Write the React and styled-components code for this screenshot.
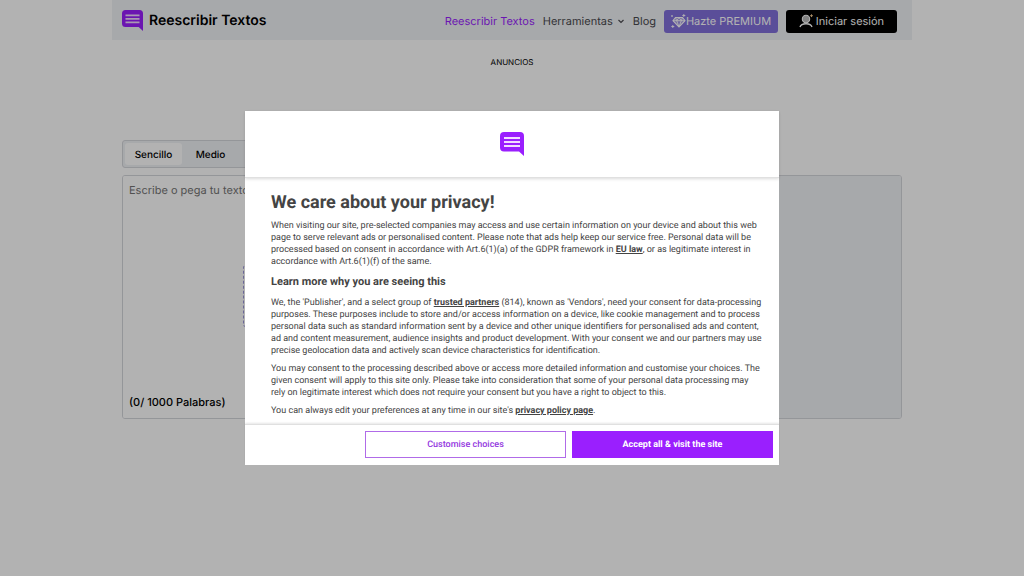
import React from 'react';
import styled, { createGlobalStyle } from 'styled-components';

const GlobalStyle = createGlobalStyle`
  * {
    box-sizing: border-box;
  }
  body {
    margin: 0;
    background: #fff;
    color: #000;
    font-family: Inter, "Liberation Sans", sans-serif;
    font-size: 11px;
    line-height: 16px;
    text-rendering: geometricPrecision;
  }
  button, textarea {
    font: inherit;
    margin: 0;
    text-rendering: inherit;
  }
  a {
    color: inherit;
    text-decoration: none;
  }
`;

const Container = styled.div`
  max-width: 800px;
  margin: 0 auto;
`;

const Header = styled.header`
  display: flex;
  align-items: center;
  justify-content: space-between;
  height: 40px;
  padding: 2px 15px 0 10px;
  background: #f0f2f5;
`;

const Brand = styled.a`
  display: flex;
  align-items: center;
  gap: 6px;
  padding-bottom: 1px;
  font-size: 14px;
  font-weight: 600;
`;

const Nav = styled.nav`
  display: flex;
  align-items: center;
  gap: 8px;
`;

const NavLink = styled.a`
  display: flex;
  align-items: center;
  gap: 4px;
  color: ${props => (props.$active ? '#9a1ffe' : '#4a4a4f')};
`;

const NavButton = styled.button`
  display: flex;
  align-items: center;
  justify-content: center;
  gap: ${props => (props.$dark ? '3px' : '0')};
  width: ${props => (props.$dark ? '111px' : '114px')};
  height: 23px;
  padding: 0;
  border: 0;
  border-radius: 3px;
  background: ${props => (props.$dark ? '#000' : '#8270dc')};
  color: #fff;
  white-space: nowrap;
  cursor: pointer;
`;

const AdLabel = styled.p`
  margin: 0;
  padding: 14px 0 70px;
  font-size: 8px;
  text-align: center;
`;

const Main = styled.main`
  padding: 0 10px;
`;

const Tabs = styled.div`
  display: flex;
  width: 50%;
  height: 28px;
  padding: 2px;
  border: 1px solid #d5d7dc;
  border-radius: 3px;
  background: #f0f2f5;
`;

const Tab = styled.button`
  width: 57px;
  padding: 1px 0 0;
  border: 0;
  border-radius: 3px;
  background: ${props => (props.$active ? '#fff' : 'transparent')};
  color: #000;
  font-size: 10px;
  font-weight: 500;
  cursor: pointer;
`;

const Editor = styled.section`
  display: grid;
  grid-template-columns: 1fr 1fr;
  height: 244px;
  margin-top: 7px;
  border: 1px solid #d5d7dc;
  border-radius: 3px;
  overflow: hidden;
`;

const Pane = styled.div`
  display: flex;
  flex-direction: column;
  align-items: center;
  justify-content: space-between;
  padding: 6px;
  background: ${props => (props.$result ? '#f0f2f5' : '#fff')};
`;

const Input = styled.textarea`
  width: 100%;
  height: 70px;
  padding: 0;
  border: 0;
  outline: 0;
  resize: none;
  background: transparent;
  &::placeholder {
    color: #757575;
    opacity: 1;
  }
`;

const DropZone = styled.div`
  width: 150px;
  height: 62px;
  border: 1px dashed #9a94d8;
  border-radius: 3px;
`;

const Counter = styled.p`
  align-self: stretch;
  margin: 54px 0 0;
  padding-bottom: 2px;
  font-weight: 500;
`;

const Overlay = styled.div`
  position: fixed;
  inset: 0;
  display: flex;
  align-items: center;
  justify-content: center;
  background: rgba(0, 0, 0, .3);
`;

const Dialog = styled.div`
  width: 534px;
  max-width: 100%;
  background: #fff;
  color: #444;
  font-family: Roboto, "Liberation Sans", sans-serif;
  font-size: 9px;
  line-height: 12px;
`;

const DialogHead = styled.div`
  display: flex;
  align-items: center;
  justify-content: center;
  height: 67px;
  border-bottom: 1px solid #e0e0e0;
  box-shadow: 0 1px 3px rgba(0, 0, 0, .15);
`;

const DialogBody = styled.div`
  padding: 13px 14px 1px 26px;
  p {
    margin: 0 0 6px;
  }
  a {
    font-weight: 700;
    text-decoration: underline;
  }
`;

const Title = styled.h1`
  margin: 0 0 5px;
  font-size: 18px;
  font-weight: 700;
  line-height: 24px;
`;

const Subtitle = styled.h2`
  margin: 7px 0 8px;
  font-size: 11px;
  font-weight: 700;
  line-height: 14px;
`;

const DialogFoot = styled.div`
  display: flex;
  justify-content: flex-end;
  gap: 6px;
  padding: 6px 6px 7px;
  border-top: 1px solid #e0e0e0;
  box-shadow: 0 -1px 2px rgba(0, 0, 0, .1);
`;

const Choice = styled.button`
  width: 201px;
  height: 27px;
  padding: 0;
  border: 1px solid ${props => (props.$filled ? '#9a1ffe' : '#b06be8')};
  background: ${props => (props.$filled ? '#9a1ffe' : '#fff')};
  color: ${props => (props.$filled ? '#fff' : '#9438e0')};
  font-weight: ${props => (props.$filled ? 700 : 500)};
  cursor: pointer;
`;

const Logo = ({ size }) => (
  <svg width={size} height={size} viewBox="0 0 24 24" aria-hidden="true">
    <path d="M4 0h16a4 4 0 0 1 4 4v20l-5-4.500H4a4 4 0 0 1-4-4V4a4 4 0 0 1 4-4z" fill="#9a1ffe" />
    <path d="M4 6h16M4 10h16M4 14h16" stroke="#f3dcff" strokeWidth="2" />
  </svg>
);

const Chevron = () => (
  <svg width="8" height="8" viewBox="0 0 8 8" fill="none" stroke="currentColor" strokeWidth="1.2" aria-hidden="true">
    <path d="M1.500 3 4 5.500 6.500 3" />
  </svg>
);

const Diamond = () => (
  <svg width="15" height="15" viewBox="0 0 15 15" fill="none" stroke="#fff" aria-hidden="true">
    <path d="M4.500 3.500h7L14 6.700 8 13 2 6.700z" fill="#fff" fillOpacity=".25" strokeWidth="1.1" />
    <path d="M2 6.700h12M4.500 3.500l1.200 3.200L8 13l2.300-6.300 1.200-3.200M5.700 6.700 8 3.500l2.300 3.200" strokeWidth=".9" />
    <path d="M12.800 0v3M11.300 1.500h3M1.800 11v3M.3 12.500h3M1 1.200v1.600M.2 2h1.600" strokeWidth=".9" />
  </svg>
);

const User = () => (
  <svg width="14" height="14" viewBox="0 0 14 14" fill="none" stroke="#fff" aria-hidden="true">
    <circle cx="7" cy="5" r="3.700" fill="#bbb" strokeWidth="1.1" />
    <path d="M1 13c.6-2.200 3-3.300 6-3.300s5.400 1.100 6 3.300" strokeWidth="1.4" />
    <path d="M12.500 .3v2.800M11.100 1.700h2.800" stroke="#f0c890" strokeWidth="1" />
  </svg>
);

const CookieDialog = () => (
  <Overlay>
    <Dialog role="dialog" aria-modal="true" aria-labelledby="privacy-title">
      <DialogHead>
        <Logo size={24} />
      </DialogHead>
      <DialogBody>
        <Title id="privacy-title">We care about your privacy!</Title>
        <p>
          When visiting our site, pre-selected companies may access and use certain information on your device and
          about this web<br />page to serve relevant ads or personalised content. Please note that ads help keep our
          service free. Personal data will be<br />processed based on consent in accordance with Art.6(1)(a) of the
          GDPR framework in <a href="#eu-law">EU law</a>, or as legitimate interest in<br />accordance with
          Art.6(1)(f) of the same.
        </p>
        <Subtitle>Learn more why you are seeing this</Subtitle>
        <p>
          We, the 'Publisher', and a select group of <a href="#partners">trusted partners</a> (814), known as
          'Vendors', need your consent for data-processing<br />purposes. These purposes include to store and/or
          access information on a device, like cookie management and to process<br />personal data such as standard
          information sent by a device and other unique identifiers for personalised ads and content,<br />ad and
          content measurement, audience insights and product development. With your consent we and our partners may
          use<br />precise geolocation data and actively scan device characteristics for identification.
        </p>
        <p>
          You may consent to the processing described above or access more detailed information and customise your
          choices. The<br />given consent will apply to this site only. Please take into consideration that some of
          your personal data processing may<br />rely on legitimate interest which does not require your consent but
          you have a right to object to this.
        </p>
        <p>
          You can always edit your preferences at any time in our site's <a href="#privacy">privacy policy page</a>.
        </p>
      </DialogBody>
      <DialogFoot>
        <Choice type="button">Customise choices</Choice>
        <Choice type="button" $filled>Accept all &amp; visit the site</Choice>
      </DialogFoot>
    </Dialog>
  </Overlay>
);

const App = () => {
  return (
    <>
      <GlobalStyle />
      <Container>
        <Header>
          <Brand href="#home">
            <Logo size={21} />
            Reescribir Textos
          </Brand>
          <Nav>
            <NavLink href="#reescribir" $active>Reescribir Textos</NavLink>
            <NavLink href="#herramientas">Herramientas <Chevron /></NavLink>
            <NavLink href="#blog">Blog</NavLink>
            <NavButton type="button"><Diamond />Hazte PREMIUM</NavButton>
            <NavButton type="button" $dark><User />Iniciar sesión</NavButton>
          </Nav>
        </Header>
        <AdLabel>ANUNCIOS</AdLabel>
        <Main>
          <Tabs>
            <Tab type="button" $active>Sencillo</Tab>
            <Tab type="button">Medio</Tab>
          </Tabs>
          <Editor>
            <Pane>
              <Input aria-label="Texto" placeholder="Escribe o pega tu texto" />
              <DropZone />
              <Counter>(0/ 1000 Palabras)</Counter>
            </Pane>
            <Pane $result />
          </Editor>
        </Main>
      </Container>
      <CookieDialog />
    </>
  );
};

export default App;
